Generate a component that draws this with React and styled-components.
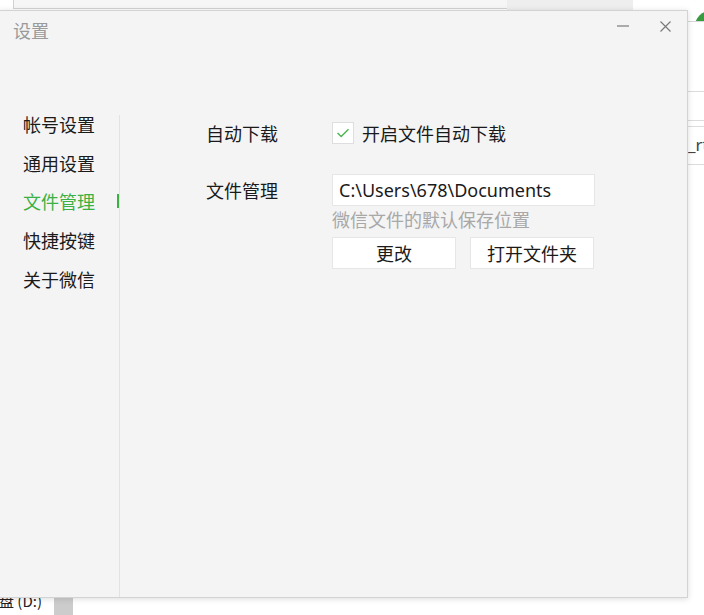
import React, { useState } from "react";
import styled, { createGlobalStyle } from "styled-components";

const GlobalStyle = createGlobalStyle`
  html, body {
    margin: 0;
    padding: 0;
    background: #ffffff;
  }
  body {
    font-family: "Noto Sans", "Noto Sans CJK SC", sans-serif;
    color: #1a1a1a;
  }
`;

const CJK = `"Noto Sans CJK SC", "Noto Sans", sans-serif`;

const Desktop = styled.div`
  position: relative;
  width: 704px;
  height: 615px;
  overflow: hidden;
  background: #ffffff;
`;

// windows lying behind the dialog
const TopWindow = styled.div`
  position: absolute;
  left: 13px;
  top: -20px;
  width: 494px;
  height: 27px;
  background: #f6f6f6;
  border: 1px solid #d2d2d2;
`;

const TopStrip = styled.div`
  position: absolute;
  left: 507px;
  top: 0;
  width: 126px;
  height: 10px;
  background: #eeeeee;
`;

const SidePanel = styled.div`
  position: absolute;
  left: 640px;
  top: 0;
  width: 64px;
  height: 200px;
  background: #ffffff;
`;

const SideHeader = styled.div`
  position: relative;
  height: 21px;
  border-bottom: 1px solid #d6d6d6;
  overflow: hidden;
`;

const Avatar = styled.div`
  position: absolute;
  left: 55px;
  top: 11px;
  width: 30px;
  height: 30px;
  border-radius: 50%;
  background: #3a9a3f;
`;

const SideLine = styled.div`
  position: absolute;
  left: 0;
  right: 0;
  top: ${(p) => p.$top}px;
  height: 1px;
  background: #dcdcdc;
`;

const SideText = styled.div`
  position: absolute;
  left: 48px;
  top: 135px;
  font-family: "Noto Sans", sans-serif;
  font-size: 17px;
  line-height: 20px;
  color: #444;
  white-space: nowrap;
`;

const DriveLabel = styled.div`
  position: absolute;
  left: -16px;
  top: 592px;
  font-family: ${CJK};
  font-size: 15px;
  line-height: 18px;
  color: #222;
  white-space: nowrap;
`;

const DriveBar = styled.div`
  position: absolute;
  left: 54px;
  top: 590px;
  width: 19px;
  height: 25px;
  background: #cccccc;
`;

// settings dialog
const Dialog = styled.div`
  position: absolute;
  left: -1px;
  top: 10px;
  width: 687px;
  height: 586px;
  background: #f4f4f4;
  border: 1px solid #d3d3d3;
  box-shadow: 0 1px 6px rgba(0, 0, 0, 0.14);
  display: flex;
  flex-direction: column;
  z-index: 2;
`;

const TitleBar = styled.div`
  display: flex;
  align-items: flex-start;
  height: 40px;
  flex-shrink: 0;
`;

const Title = styled.div`
  flex: 1;
  padding: 9px 0 0 13px;
  font-family: ${CJK};
  font-size: 18px;
  line-height: 20px;
  color: #9a9a9a;
`;

const WinButton = styled.button`
  width: 43px;
  height: 30px;
  padding: 0;
  border: none;
  background: transparent;
  display: flex;
  align-items: center;
  justify-content: center;
  cursor: pointer;
`;

const Body = styled.div`
  flex: 1;
  display: flex;
  padding-top: 64px;
  min-height: 0;
`;

const Sidebar = styled.nav`
  width: 119px;
  flex-shrink: 0;
  border-right: 1px solid #e2e2e2;
  display: flex;
  flex-direction: column;
  gap: 18.7px;
`;

const NavItem = styled.div`
  position: relative;
  padding-left: 23px;
  font-family: ${CJK};
  font-size: 18px;
  line-height: 20px;
  color: ${(p) => (p.$active ? "#3bb143" : "#1a1a1a")};
  cursor: pointer;

  &:first-child {
    margin-top: -1px;
  }

  &::after {
    content: "";
    display: ${(p) => (p.$active ? "block" : "none")};
    position: absolute;
    right: 0;
    top: 3px;
    width: 2px;
    height: 14px;
    background: #3bb143;
  }
`;

const Content = styled.div`
  flex: 1;
  padding: 7px 0 0 86px;
  display: flex;
  flex-direction: column;
  gap: 30px;
`;

const Row = styled.div`
  display: flex;
  align-items: flex-start;
`;

const Label = styled.div`
  width: 126px;
  flex-shrink: 0;
  font-family: ${CJK};
  font-size: 18px;
  line-height: ${(p) => p.$lh}px;
  color: #1a1a1a;
`;

const Field = styled.div`
  display: flex;
  flex-direction: column;
  width: 263px;
`;

const CheckLine = styled.label`
  display: flex;
  align-items: center;
  gap: 8px;
  font-family: ${CJK};
  font-size: 18px;
  line-height: 22px;
  color: #1a1a1a;
  cursor: pointer;
`;

const Box = styled.span`
  width: 20px;
  height: 20px;
  background: #ffffff;
  border: 1px solid #dedede;
  display: flex;
  align-items: center;
  justify-content: center;
`;

const PathInput = styled.div`
  height: 30px;
  background: #ffffff;
  border: 1px solid #e6e6e6;
  padding-left: 6px;
  font-family: "Noto Sans", sans-serif;
  font-size: 18px;
  line-height: 30px;
  color: #1a1a1a;
  white-space: nowrap;
`;

const Hint = styled.div`
  margin-top: 1px;
  font-family: ${CJK};
  font-size: 18px;
  line-height: 24px;
  color: #a8a8a8;
`;

const Buttons = styled.div`
  display: flex;
  gap: 14px;
  margin-top: 6px;
`;

const Button = styled.button`
  width: 124px;
  height: 32px;
  background: #ffffff;
  border: 1px solid #e6e6e6;
  font-family: ${CJK};
  font-size: 18px;
  color: #1a1a1a;
  padding: 0;
  cursor: pointer;
`;

const navItems = ["帐号设置", "通用设置", "文件管理", "快捷按键", "关于微信"];

export default function App() {
  const [active, setActive] = useState("文件管理");
  const [autoDownload, setAutoDownload] = useState(true);

  return (
    <>
      <GlobalStyle />
      <Desktop>
        <TopWindow />
        <TopStrip />
        <SidePanel>
          <SideHeader>
            <Avatar />
          </SideHeader>
          <SideLine $top={91} />
          <SideLine $top={120} />
          <SideLine $top={126} />
          <SideText>_rtf</SideText>
          <SideLine $top={164} />
        </SidePanel>
        <DriveLabel>磁盘 (D:)</DriveLabel>
        <DriveBar />

        <Dialog>
          <TitleBar>
            <Title>设置</Title>
            <WinButton aria-label="minimize">
              <svg width="12" height="2" viewBox="0 0 12 2">
                <line x1="0" y1="1" x2="12" y2="1" stroke="#7a7a7a" strokeWidth="1.2" />
              </svg>
            </WinButton>
            <WinButton aria-label="close">
              <svg width="11" height="11" viewBox="0 0 11 11">
                <path d="M0.5 0.5 L10.5 10.5 M10.5 0.5 L0.5 10.5" stroke="#7a7a7a" strokeWidth="1.2" fill="none" />
              </svg>
            </WinButton>
          </TitleBar>
          <Body>
            <Sidebar>
              {navItems.map((item) => (
                <NavItem key={item} $active={item === active} onClick={() => setActive(item)}>
                  {item}
                </NavItem>
              ))}
            </Sidebar>
            <Content>
              <Row>
                <Label $lh={22}>自动下载</Label>
                <CheckLine onClick={() => setAutoDownload(!autoDownload)}>
                  <Box>
                    {autoDownload && (
                      <svg width="14" height="12" viewBox="0 0 14 12">
                        <path d="M1.5 6 L5.2 9.6 L12.5 2.2" stroke="#4cb552" strokeWidth="1.4" fill="none" />
                      </svg>
                    )}
                  </Box>
                  开启文件自动下载
                </CheckLine>
              </Row>
              <Row>
                <Label $lh={32}>文件管理</Label>
                <Field>
                  <PathInput>C:\Users\678\Documents</PathInput>
                  <Hint>微信文件的默认保存位置</Hint>
                  <Buttons>
                    <Button>更改</Button>
                    <Button>打开文件夹</Button>
                  </Buttons>
                </Field>
              </Row>
            </Content>
          </Body>
        </Dialog>
      </Desktop>
    </>
  );
}
